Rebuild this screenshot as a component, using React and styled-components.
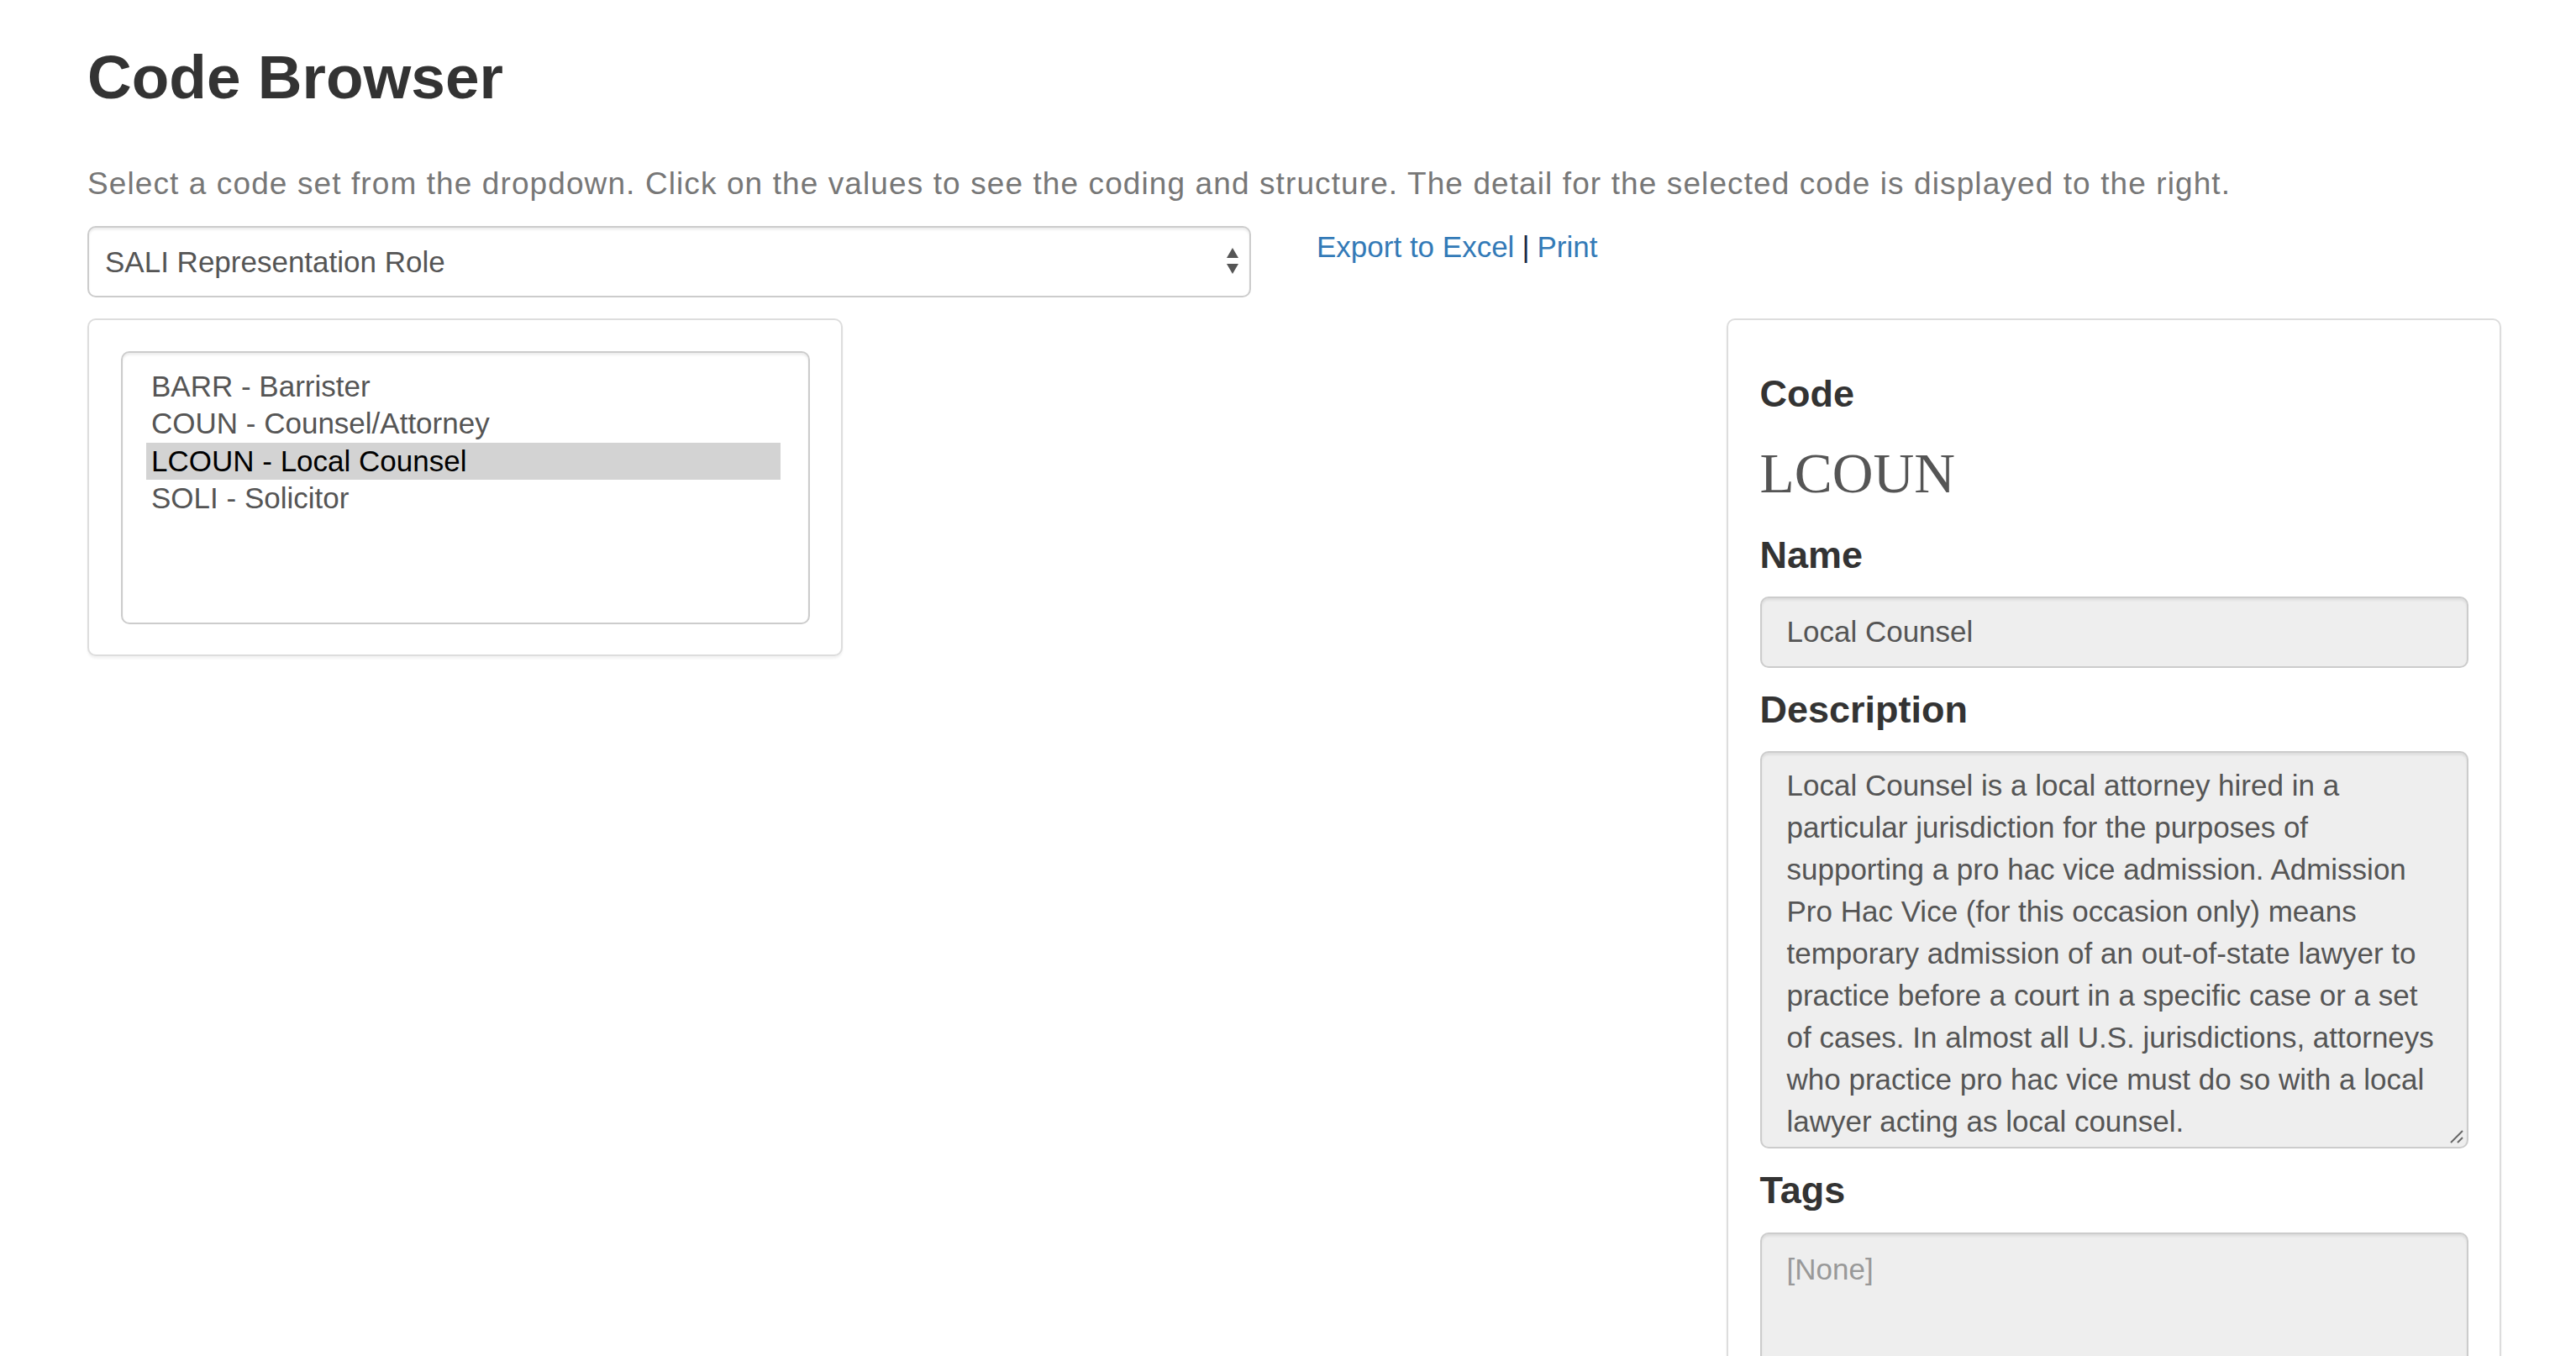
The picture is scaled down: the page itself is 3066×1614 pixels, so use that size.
import React from 'react';
import styled, { createGlobalStyle } from 'styled-components';

const GlobalStyle = createGlobalStyle`
  html, body {
    margin: 0;
    padding: 0;
    overflow: hidden;
    background: #fff;
  }
  body {
    font-family: "Liberation Sans", Arial, sans-serif;
    color: #333;
  }
`;

const codes = [
  { code: 'BARR', name: 'Barrister' },
  { code: 'COUN', name: 'Counsel/Attorney' },
  { code: 'LCOUN', name: 'Local Counsel' },
  { code: 'SOLI', name: 'Solicitor' },
];

const descriptionLines = [
  'Local Counsel is a local attorney hired in a',
  'particular jurisdiction for the purposes of',
  'supporting a pro hac vice admission. Admission',
  'Pro Hac Vice (for this occasion only) means',
  'temporary admission of an out-of-state lawyer to',
  'practice before a court in a specific case or a set',
  'of cases. In almost all U.S. jurisdictions, attorneys',
  'who practice pro hac vice must do so with a local',
  'lawyer acting as local counsel.',
];

const CodeBrowser = () => {
  const selected = 'LCOUN';

  return (
    <Page>
      <GlobalStyle />
      <Title>Code Browser</Title>
      <Intro>
        Select a code set from the dropdown. Click on the values to see the coding and structure. The detail for the selected code is displayed to the right.
      </Intro>

      <Toolbar>
        <SelectBox>
          <SelectText>SALI Representation Role</SelectText>
          <svg width="16" height="34" viewBox="0 0 16 34">
            <polygon points="8,0 15,12 1,12" fill="#555" />
            <polygon points="1,19 15,19 8,31" fill="#555" />
          </svg>
        </SelectBox>
        <Links>
          <LinkText href="#">Export to Excel</LinkText>
          <Separator>|</Separator>
          <LinkText href="#">Print</LinkText>
        </Links>
      </Toolbar>

      <Columns>
        <Panel>
          <ListBox>
            {codes.map((c) => (
              <Option key={c.code} $active={c.code === selected}>
                {c.code} - {c.name}
              </Option>
            ))}
          </ListBox>
        </Panel>

        <div />

        <DetailPanel>
          <Label>Code</Label>
          <CodeValue>LCOUN</CodeValue>
          <Label $gap={35}>Name</Label>
          <ReadOnlyField>Local Counsel</ReadOnlyField>
          <Label>Description</Label>
          <TextArea>
            {descriptionLines.join('\n')}
            <ResizeHandle width="18" height="18" viewBox="0 0 18 18">
              <line x1="2" y1="16" x2="16" y2="2" stroke="#666" strokeWidth="2" />
              <line x1="10" y1="16" x2="16" y2="10" stroke="#666" strokeWidth="2" />
            </ResizeHandle>
          </TextArea>
          <Label>Tags</Label>
          <TagsBox>[None]</TagsBox>
        </DetailPanel>
      </Columns>
    </Page>
  );
};

// Layout
const Page = styled.div`
  padding: 52px 89px 0 104px;
`;

const Title = styled.h1`
  margin: 0;
  font-size: 73px;
  font-weight: 700;
  line-height: 1.1;
  color: #333;
`;

const Intro = styled.p`
  margin: 62px 0 0;
  font-size: 37px;
  letter-spacing: 1.1px;
  line-height: 50px;
  color: #777;
`;

const Toolbar = styled.div`
  display: flex;
  align-items: flex-start;
  margin-top: 25px;
`;

const SelectBox = styled.div`
  box-sizing: border-box;
  width: 1385px;
  height: 85px;
  display: flex;
  align-items: center;
  justify-content: space-between;
  padding: 0 12px 0 19px;
  border: 2.5px solid #ccc;
  border-radius: 10px;
  background: #fff;
  box-shadow: inset 0 2.5px 2.5px rgba(0, 0, 0, 0.075);
`;

const SelectText = styled.span`
  font-size: 35px;
  color: #555;
`;

const Links = styled.div`
  margin-left: 78px;
  font-size: 35px;
  line-height: 50px;
`;

const LinkText = styled.a`
  color: #337ab7;
  text-decoration: none;
`;

const Separator = styled.span`
  color: #1c2a44;
  margin: 0 9px;
`;

const Columns = styled.div`
  display: grid;
  grid-template-columns: 899px 1fr 922px;
  align-items: start;
  margin-top: 25px;
`;

const Panel = styled.div`
  box-sizing: border-box;
  padding: 36.5px 37.5px;
  border: 2.5px solid #ddd;
  border-radius: 10px;
  background: #fff;
  box-shadow: 0 2.5px 2.5px rgba(0, 0, 0, 0.05);
`;

const ListBox = styled.div`
  box-sizing: border-box;
  height: 325px;
  padding: 18px 32.5px 0 28.5px;
  border: 2.5px solid #ccc;
  border-radius: 10px;
  box-shadow: inset 0 2.5px 2.5px rgba(0, 0, 0, 0.075);
`;

const Option = styled.div`
  height: 44.5px;
  line-height: 44.5px;
  padding-left: 6px;
  font-size: 35px;
  color: ${(p) => (p.$active ? '#000' : '#555')};
  background: ${(p) => (p.$active ? '#d3d3d3' : 'transparent')};
  white-space: nowrap;
`;

const DetailPanel = styled.div`
  box-sizing: border-box;
  height: 1400px;
  padding: 0 37.5px 37.5px 37.5px;
  border: 2.5px solid #ddd;
  border-radius: 10px;
  background: #fff;
  box-shadow: 0 2.5px 2.5px rgba(0, 0, 0, 0.05);
  overflow: hidden;
`;

const Label = styled.h4`
  margin: ${(p) => p.$gap ?? 25}px 0 0;
  font-size: 45px;
  font-weight: 700;
  line-height: 1.1;
  color: #333;
  &:first-child {
    margin-top: 62.5px;
  }
`;

const CodeValue = styled.div`
  margin-top: 33.5px;
  font-family: "Liberation Serif", "Times New Roman", serif;
  font-size: 67.5px;
  line-height: 1.1;
  color: #555;
`;

const ReadOnlyField = styled.div`
  box-sizing: border-box;
  height: 85px;
  margin-top: 24px;
  padding: 0 30px;
  display: flex;
  align-items: center;
  font-size: 35px;
  color: #555;
  background: #eee;
  border: 2.5px solid #ccc;
  border-radius: 10px;
  box-shadow: inset 0 2.5px 2.5px rgba(0, 0, 0, 0.075);
`;

const TextArea = styled.div`
  position: relative;
  box-sizing: border-box;
  height: 473px;
  margin-top: 25px;
  padding: 14px 30px 0;
  font-size: 35px;
  line-height: 50px;
  color: #555;
  white-space: pre;
  overflow: hidden;
  background: #eee;
  border: 2.5px solid #ccc;
  border-radius: 10px;
  box-shadow: inset 0 2.5px 2.5px rgba(0, 0, 0, 0.075);
`;

const ResizeHandle = styled.svg`
  position: absolute;
  right: 3px;
  bottom: 3px;
`;

const TagsBox = styled.div`
  box-sizing: border-box;
  height: 240px;
  margin-top: 25px;
  padding: 17px 30px 0;
  font-size: 35px;
  line-height: 50px;
  color: #999;
  background: #eee;
  border: 2.5px solid #ccc;
  border-radius: 10px;
  box-shadow: inset 0 2.5px 2.5px rgba(0, 0, 0, 0.075);
`;

export default CodeBrowser;
